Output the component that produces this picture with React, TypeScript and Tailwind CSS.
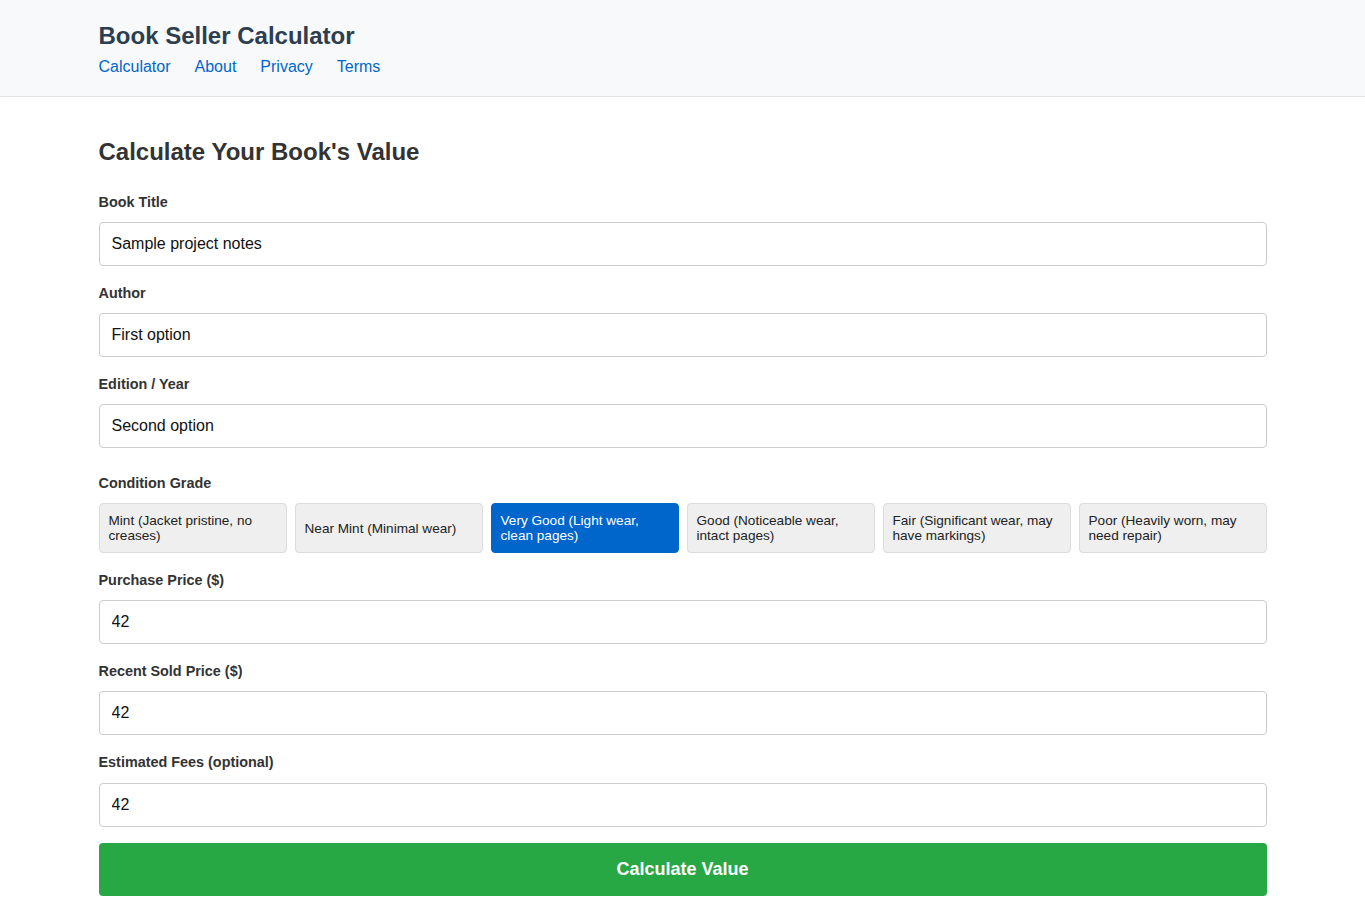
import React, { useState } from "react";

const grades = [
  "Mint (Jacket pristine, no creases)",
  "Near Mint (Minimal wear)",
  "Very Good (Light wear, clean pages)",
  "Good (Noticeable wear, intact pages)",
  "Fair (Significant wear, may have markings)",
  "Poor (Heavily worn, may need repair)",
];

const Field: React.FC<{ label: string; value: string; className?: string; gap?: string }> = ({
  label,
  value,
  className,
  gap,
}) => (
  <div className={className ?? "mb-[16px]"}>
    <label className={"block pt-[1px] text-[14.4px] leading-[20px] font-bold text-[#333] " + (gap ?? "mb-[10px]")}>
      {label}
    </label>
    <input
      defaultValue={value}
      className="block w-full h-[44px] px-3 text-[16px] text-[#111] bg-white border border-[#ccc] rounded-[4px] outline-none"
    />
  </div>
);

const App: React.FC = () => {
  const [grade, setGrade] = useState(2);

  return (
    <div className="min-h-screen bg-white font-['Liberation_Sans',Arial,sans-serif]">
      {/* header */}
      <header className="bg-[#f8f9fa] border-b border-[#e6e6e6] shadow-[0_1px_3px_rgba(0,0,0,0.03)]">
        <div className="mx-auto max-w-[1200px] px-4 pt-[21px] pb-[19px]">
          <h1 className="text-[24px] leading-[30px] font-bold text-[#2c3e50]">Book Seller Calculator</h1>
          <nav className="mt-[6px] flex gap-6 text-[16px] leading-[20px] text-[#0066cc]">
            <a href="#">Calculator</a>
            <a href="#">About</a>
            <a href="#">Privacy</a>
            <a href="#">Terms</a>
          </nav>
        </div>
      </header>

      <main className="mx-auto max-w-[1200px] px-4 pt-[40px] pb-8">
        <h2 className="text-[24px] leading-[30px] font-bold text-[#333] mb-[24px]">Calculate Your Book's Value</h2>

        <Field label="Book Title" value="Sample project notes" />
        <Field label="Author" value="First option" />
        <Field label="Edition / Year" value="Second option" className="mb-[24px]" />

        {/* condition */}
        <div className="mb-[16px]">
          <label className="block pt-[1px] text-[14.4px] leading-[20px] font-bold text-[#333] mb-[10px]">
            Condition Grade
          </label>
          <div className="grid grid-cols-6 gap-2">
            {grades.map((g, i) => (
              <button
                key={g}
                onClick={() => setGrade(i)}
                className={
                  "h-[50px] px-[9px] text-left text-[13.6px] leading-[15px] rounded-[4px] border " +
                  (i === grade
                    ? "bg-[#0066cc] border-[#0066cc] text-white"
                    : "bg-[#efefef] border-[#dcdcdc] text-[#222]")
                }
              >
                {g}
              </button>
            ))}
          </div>
        </div>

        <Field label="Purchase Price ($)" value="42" />
        <Field label="Recent Sold Price ($)" value="42" />
        <Field label="Estimated Fees (optional)" value="42" className="mb-[16px]" gap="mb-[11px]" />

        <button className="w-full h-[53px] rounded-[4px] bg-[#28a745] text-white text-[18px] font-bold">
          Calculate Value
        </button>
      </main>
    </div>
  );
};

export default App;
